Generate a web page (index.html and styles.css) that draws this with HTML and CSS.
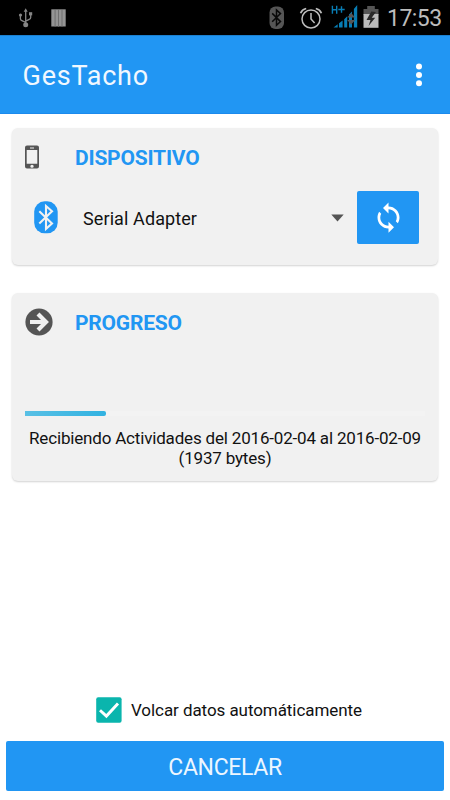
FILE: index.html
```html
<!DOCTYPE html>
<html lang="es">
<head>
<meta charset="utf-8">
<title>GesTacho</title>
<link rel="stylesheet" href="styles.css">
</head>
<body>
<div class="statusbar">
  <svg class="usb" width="16" height="22" viewBox="0 0 16 22" fill="none" stroke="#858585" stroke-width="1.3">
    <path d="M7.7 3v14M2.4 8.500v3.200q0 1.300 1.500 1.900l3.800 1.700M12.700 7.500v3q0 1.300-1.500 1.900l-3.500 1.700"/>
    <path d="M5.700 4.800L7.700 1.300l2 3.500z" fill="#858585" stroke="none"/>
    <circle cx="7.700" cy="17.800" r="2.500" fill="#858585" stroke="none"/>
    <circle cx="2.500" cy="8" r="1.600" fill="#858585" stroke="none"/>
    <path d="M11 5.200h3.200v3.200H11z" fill="#858585" stroke="none"/>
  </svg>
  <svg class="bars" width="15" height="18" viewBox="0 0 15 18"><path d="M.3.300h14.400v17.200H.3z" fill="#949494"/><path d="M4.100 0v18M7.500 0v18M11 0v18" stroke="#666" stroke-width=".8"/></svg>
  <svg class="bt-small" width="16" height="24" viewBox="0 0 16 24"><rect x=".5" y=".5" width="14.500" height="22.500" rx="6" fill="#555"/><path d="M3.200 7.400l8.300 8.200-4 3.700V3.900l4 3.700-8.300 8.200" fill="none" stroke="#080808" stroke-width="1.500"/></svg>
  <svg class="alarm" width="24" height="24" viewBox="0 0 24 24" fill="none" stroke="#bcbcbc"><circle cx="12" cy="13" r="9" stroke-width="1.500"/><path d="M12 7v6l3.600 4" stroke-width="1.500"/><path d="M1.600 7.200Q3 3.500 7.200 2.500M16.800 2.500Q21 3.500 22.400 7.200" stroke-width="1.700"/></svg>
  <svg class="signal" width="28" height="25" viewBox="0 0 28 25"><path d="M2.500 23.500l4.200-3.300v3.300zM8 19.300l3.600-2.800v7H8zM13.200 15.200l3-2.900v11.200h-3zM18 10.600l3-3v15.900h-3zM22.900 5l3.300-4v22.500h-3.300z" fill="#087db4"/><path d="M1.400 1.800v8M5.700 1.800v8M1.400 5.800h4.300M7.300 5.500h6.400M10.500 2.300v6.400" fill="none" stroke="#087db4" stroke-width="1.400"/><path d="M16.200 13.500l4-4.500 4 4.500zM16.200 16l4 4.500 4-4.500z" fill="#555"/></svg>
  <svg class="battery" width="18" height="24" viewBox="0 0 18 24"><path d="M5.200 1h7.600v3h3.700v6h-15V4h3.700z" fill="#555"/><path d="M1.500 9h15v13.800h-15z" fill="#bbb"/><path d="M9.300 6.500L4.500 15h4l-2 6 6.700-8.300H9.700l4.200-5.700z" fill="#292929"/></svg>
  <span class="clock">17:53</span>
</div>
<header class="appbar">
  <h1>GesTacho</h1>
  <svg width="8" height="26" viewBox="0 0 8 26" fill="#fff"><circle cx="4" cy="4.500" r="3"/><circle cx="4" cy="13" r="3"/><circle cx="4" cy="21.300" r="3"/></svg>
</header>
<main>
  <section class="card device">
    <div class="card-head">
      <svg class="phone" width="14" height="24" viewBox="0 0 14 24"><path fill="#555" fill-rule="evenodd" d="M2 .5h10a2 2 0 0 1 2 2v19a2 2 0 0 1-2 2H2a2 2 0 0 1-2-2v-19a2 2 0 0 1 2-2zM1.700 5v13.700h10.600V5zM5 2.500v1h4v-1zM5.300 21.200a1.700 1.500 0 1 0 3.400 0 1.700 1.500 0 1 0-3.400 0z"/></svg>
      <h2>DISPOSITIVO</h2>
    </div>
    <div class="picker">
      <svg class="bt" width="24" height="33" viewBox="0 0 24 33"><rect x=".2" y=".3" width="23.500" height="32" rx="10.500" fill="#2196f3"/><path d="M5.300 10.300L18 22.500l-6 5.400V5l6 5.300L5.300 22.500" fill="none" stroke="#f1f1f1" stroke-width="2.100"/></svg>
      <span class="adapter">Serial Adapter</span>
      <svg class="caret" width="13" height="8" viewBox="0 0 13 8"><path d="M.3.600h12.400L6.500 7.400z" fill="#555"/></svg>
      <button class="refresh" aria-label="Actualizar">
        <svg width="33" height="33" viewBox="0 0 24 24" fill="#fff"><path d="M12 4V1L8 5l4 4V6c3.310 0 6 2.690 6 6 0 1.010-.25 1.970-.7 2.800l1.460 1.460C19.540 15.030 20 13.570 20 12c0-4.420-3.580-8-8-8zm0 14c-3.310 0-6-2.690-6-6 0-1.010.25-1.970.7-2.800L5.240 7.740C4.460 8.970 4 10.430 4 12c0 4.420 3.580 8 8 8v3l4-4-4-4v3z"/></svg>
      </button>
    </div>
  </section>
  <section class="card progress">
    <div class="card-head">
      <svg class="arrow" width="28" height="28" viewBox="0 0 28 28"><circle cx="14" cy="14" r="13.600" fill="#555"/><path d="M5 14h15M13 5.900l8 8.100-8 8.100" fill="none" stroke="#f1f1f1" stroke-width="4.200"/></svg>
      <h2>PROGRESO</h2>
    </div>
    <div class="track"><div class="fill"></div></div>
    <p class="message">Recibiendo Actividades del 2016-02-04 al 2016-02-09<br>(1937 bytes)</p>
  </section>
</main>
<footer>
  <div class="option">
    <svg width="26" height="26" viewBox="0 0 26 26"><rect x=".2" y=".3" width="25.400" height="25.400" rx="2" fill="#0ab5ad"/><path d="M4 13.200l6.400 5.900L22 6.400" fill="none" stroke="#fff" stroke-width="2.900"/></svg>
    <span>Volcar datos automáticamente</span>
  </div>
  <button class="cancel">CANCELAR</button>
</footer>
</body>
</html>
```

FILE: styles.css
```css
* { box-sizing: border-box; }
body {
  margin: 0;
  width: 450px;
  height: 800px;
  display: flex;
  flex-direction: column;
  overflow: hidden;
  background: #fff;
  color: #111;
  font-family: Roboto, "Liberation Sans", sans-serif;
}
svg { display: block; flex: none; }
h1, h2, p { margin: 0; }
button { border: 0; padding: 0; font-family: inherit; background: #2196f3; color: #fff; }
.statusbar {
  height: 35px;
  flex: none;
  display: flex;
  align-items: flex-start;
  background: #000;
}
.usb { margin: 7px 0 0 18px; }
.bars { margin: 9px 0 0 17px; }
.bt-small { margin: 6px 0 0 203px; }
.alarm { margin: 6px 0 0 14px; }
.signal { margin: 4px 0 0 8px; }
.battery { margin: 5px 0 0 3px; }
.clock { margin: 5px 0 0 7px; font-size: 23px; line-height: 28px; letter-spacing: -.55px; color: #bcbcbc; white-space: nowrap; }
.appbar {
  height: 79px;
  flex: none;
  display: flex;
  align-items: center;
  justify-content: space-between;
  padding: 1px 27px 0 22.5px;
  background: #2196f3;
  border-top: 1px solid #1b80cf;
  border-bottom: 1px solid #1c8aed;
  color: #f1f8ff;
}
h1 { margin-top: 2px; font-size: 27px; font-weight: 400; line-height: 32px; letter-spacing: .75px; }
main { padding: 14px 12px 0; }
.card {
  border-radius: 6px;
  background: #f1f1f1;
  box-shadow: 0 1px 2px rgba(0, 0, 0, .18);
  padding: 0 13px;
}
.device { height: 137px; margin-bottom: 28px; }
.progress { height: 188px; }
.card-head { height: 58px; display: flex; align-items: center; }
h2 { margin-top: 2px; font-size: 21px; line-height: 26px; font-weight: 700; letter-spacing: -.2px; color: #2196f3; }
.phone { margin-right: 36px; }
.arrow { margin-right: 22px; }
.picker { height: 62px; display: flex; align-items: center; padding: 0 6px 0 9px; }
.bt { margin-top: 1px; }
.adapter { flex: 1; padding: 2px 0 0 25px; font-size: 18px; letter-spacing: .1px; }
.caret { margin: 2px 13px 0 0; }
.refresh { width: 62px; height: 53px; border-radius: 2px; display: flex; align-items: center; justify-content: center; }
.track { height: 5px; margin-top: 60px; background: #f3f3f3; }
.fill { width: 81px; height: 5px; border-radius: 0 2px 2px 0; background: linear-gradient(90deg, #59c0e5, #31b2e1); }
.message { margin-top: 12px; font-size: 17px; line-height: 20px; letter-spacing: -.18px; text-align: center; white-space: nowrap; }
footer { margin-top: auto; padding: 0 6px 9px; }
.option { display: flex; align-items: center; height: 26px; margin-bottom: 18px; padding-left: 90px; font-size: 17px; letter-spacing: -.07px; }
.option span { padding-left: 9px; white-space: nowrap; }
.cancel { display: block; width: 438px; height: 50px; padding-top: 2px; border-radius: 2px; font-size: 23px; letter-spacing: -.35px; color: #edf6ff; }
```
